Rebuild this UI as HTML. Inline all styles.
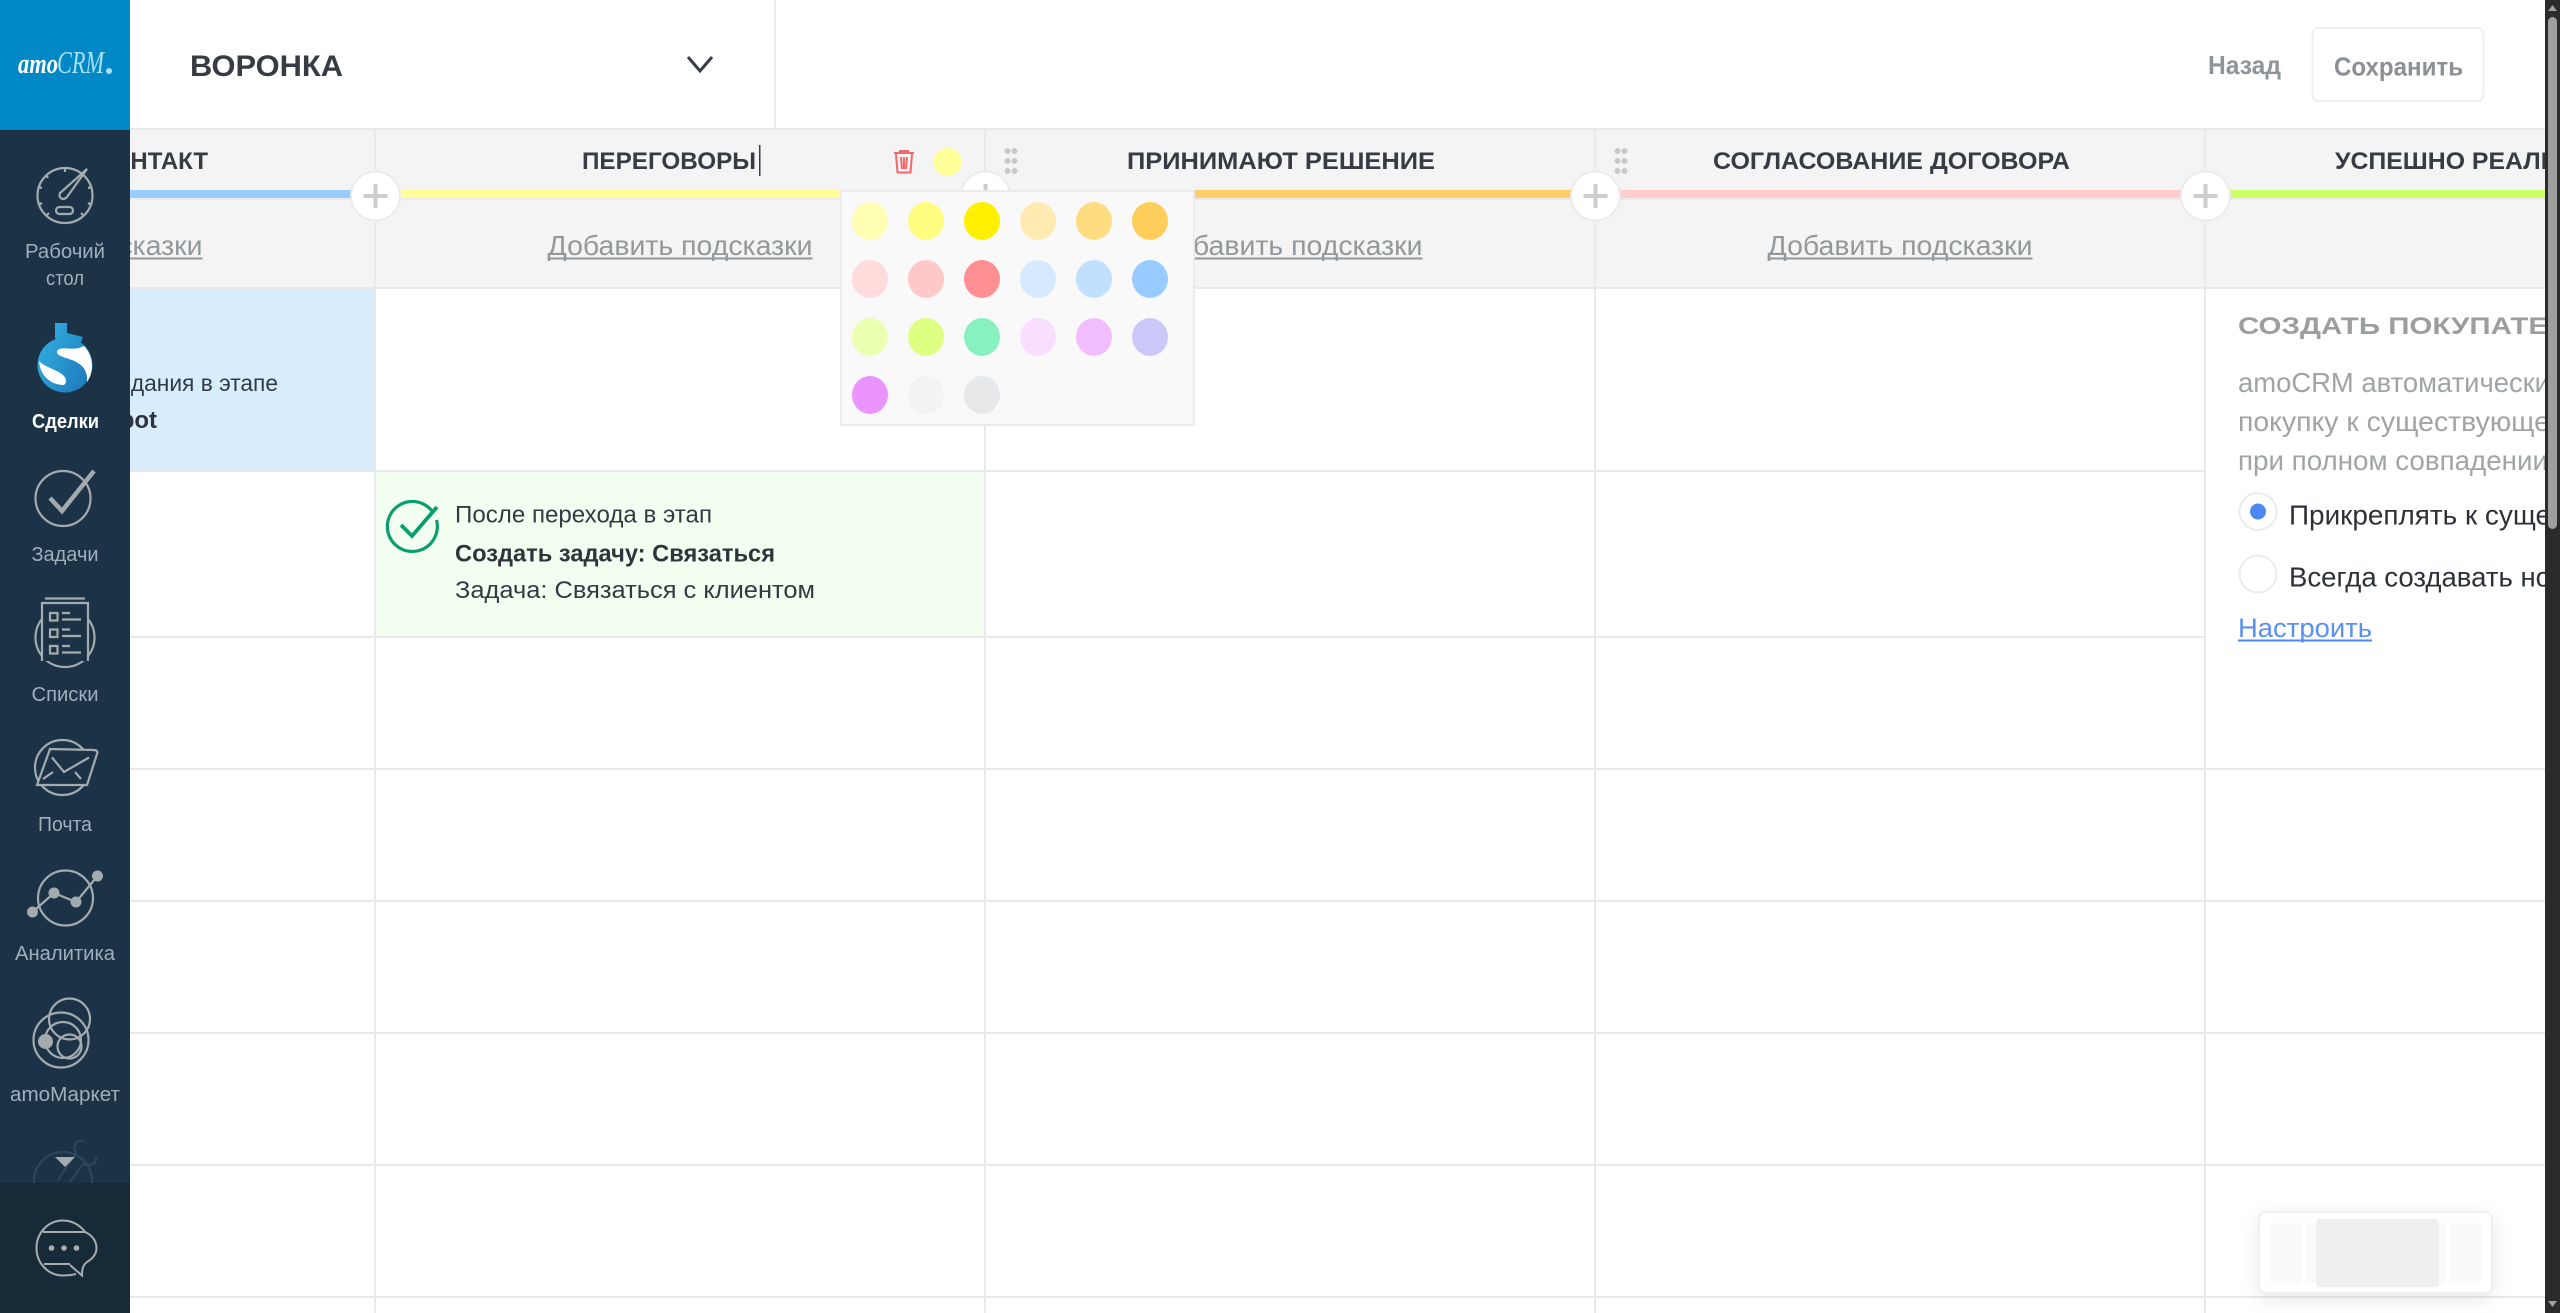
<!DOCTYPE html>
<html lang="ru">
<head>
<meta charset="utf-8">
<title>Воронка</title>
<style>
html,body{margin:0;padding:0;width:2560px;height:1313px;overflow:hidden;background:#fff}
svg{display:block}
text{font-family:"Liberation Sans","DejaVu Sans",sans-serif}
.b{font-weight:700}
</style>
</head>
<body>
<svg xmlns="http://www.w3.org/2000/svg" width="2560" height="1313" viewBox="0 0 2560 1313">
<defs>
<linearGradient id="dg" gradientUnits="userSpaceOnUse" x1="37" y1="340" x2="93" y2="370"><stop offset="0" stop-color="#30aee0"/><stop offset="1" stop-color="#1f7cbd"/></linearGradient>
<filter id="sh" x="-20%" y="-40%" width="140%" height="190%"><feDropShadow dx="0" dy="5" stdDeviation="9" flood-color="#000" flood-opacity="0.09"/></filter>
<clipPath id="wr"><rect x="0" y="1130" width="130" height="53"/></clipPath>
</defs>

<rect width="2560" height="1313" fill="#fff"/>

<!-- top header -->
<rect x="130" y="128" width="2415" height="2" fill="#e8e9ea"/>
<rect x="774" y="0" width="2" height="128" fill="#e8e9ea"/>
<text class="b" x="190" y="76" font-size="29.500" fill="#363b44" textLength="153" lengthAdjust="spacingAndGlyphs">ВОРОНКА</text>
<path d="M688 57 L700 71 L712 57" fill="none" stroke="#363b44" stroke-width="3"/>
<text class="b" x="2208" y="74" font-size="26" fill="#8e9499" textLength="73" lengthAdjust="spacingAndGlyphs">Назад</text>
<rect x="2312.500" y="28" width="171" height="73" rx="6" fill="#fff" stroke="#f0f0f0" stroke-width="2"/>
<text class="b" x="2334" y="75.500" font-size="26" fill="#8b8f96" textLength="129" lengthAdjust="spacingAndGlyphs">Сохранить</text>

<!-- stage header band -->
<rect x="130" y="130" width="2415" height="157" fill="#f4f4f4"/>
<rect x="130" y="287" width="2415" height="2" fill="#e8e9ea"/>
<rect x="130" y="198" width="2415" height="2" fill="#ebebeb"/>
<rect x="130" y="190" width="245" height="8" fill="#99ccff"/>
<rect x="375" y="190" width="610" height="8" fill="#ffff99"/>
<rect x="985" y="190" width="610" height="8" fill="#ffcc66"/>
<rect x="1595" y="190" width="610" height="8" fill="#ffcccc"/>
<rect x="2205" y="190" width="340" height="8" fill="#ccff66"/>

<!-- blue & green cells -->
<rect x="130" y="289" width="244" height="181" fill="#d7edfd"/>
<rect x="376" y="472" width="609" height="164" fill="#f2fef0"/>

<!-- grid lines -->
<g fill="#e8e9ea">
<rect x="374" y="130" width="2" height="1183"/>
<rect x="984" y="130" width="2" height="1183"/>
<rect x="1594" y="130" width="2" height="1183"/>
<rect x="2204" y="130" width="2" height="1183"/>
<rect x="130" y="470" width="2074" height="2"/>
<rect x="130" y="636" width="2074" height="2"/>
<rect x="130" y="768" width="2415" height="2"/>
<rect x="130" y="900" width="2415" height="2"/>
<rect x="130" y="1032" width="2415" height="2"/>
<rect x="130" y="1164" width="2415" height="2"/>
<rect x="130" y="1296" width="2415" height="2"/>
</g>

<!-- plus buttons -->
<g fill="#fff" stroke="#ebebeb" stroke-width="2">
<circle cx="375.500" cy="196" r="24.500"/><circle cx="985.500" cy="196" r="24.500"/><circle cx="1595.500" cy="196" r="24.500"/><circle cx="2205.500" cy="196" r="24.500"/>
</g>
<g stroke="#cdcdcd" stroke-width="4" fill="none">
<path d="M363.500 196H387.500M375.500 184V208"/>
<path d="M973.500 196H997.500M985.500 184V208"/>
<path d="M1583.500 196H1607.500M1595.500 184V208"/>
<path d="M2193.500 196H2217.500M2205.500 184V208"/>
</g>

<!-- stage titles -->
<g class="b" font-size="24" fill="#363b44" font-weight="700">
<text x="-68" y="169" textLength="276" lengthAdjust="spacingAndGlyphs">ПЕРВИЧНЫЙ КОНТАКТ</text>
<text x="582" y="169" textLength="174" lengthAdjust="spacingAndGlyphs">ПЕРЕГОВОРЫ</text>
<text x="1127" y="169" textLength="308" lengthAdjust="spacingAndGlyphs">ПРИНИМАЮТ РЕШЕНИЕ</text>
<text x="1713" y="169" textLength="357" lengthAdjust="spacingAndGlyphs">СОГЛАСОВАНИЕ ДОГОВОРА</text>
<text x="2335" y="169" textLength="330" lengthAdjust="spacingAndGlyphs">УСПЕШНО РЕАЛИЗОВАНО</text>
</g>
<rect x="759" y="145" width="1.500" height="31" fill="#363b44"/>

<!-- drag dots -->
<g fill="#c9c9c9">
<circle cx="1007.500" cy="151" r="3"/><circle cx="1014.500" cy="151" r="3"/><circle cx="1007.500" cy="161" r="3"/><circle cx="1014.500" cy="161" r="3"/><circle cx="1007.500" cy="171" r="3"/><circle cx="1014.500" cy="171" r="3"/>
<circle cx="1617.500" cy="151" r="3"/><circle cx="1624.500" cy="151" r="3"/><circle cx="1617.500" cy="161" r="3"/><circle cx="1624.500" cy="161" r="3"/><circle cx="1617.500" cy="171" r="3"/><circle cx="1624.500" cy="171" r="3"/>
</g>

<!-- trash and colour dot -->
<g fill="none" stroke="#f1696b" stroke-width="2">
<path d="M894 153H914"/>
<path d="M900 153V151H908V153"/>
<path d="M896 154L897.500 172.500H910.500L912 154"/>
<path d="M901 157L902 169M904 157V169M907 157L906 169"/>
</g>
<circle cx="947.500" cy="162" r="14" fill="#ffff99"/>

<!-- hints -->
<g font-size="27.500" fill="#92989b">
<text x="-62.500" y="255" textLength="265" lengthAdjust="spacingAndGlyphs">Добавить подсказки</text>
<text x="547.500" y="255" textLength="265" lengthAdjust="spacingAndGlyphs">Добавить подсказки</text>
<text x="1157.500" y="255" textLength="265" lengthAdjust="spacingAndGlyphs">Добавить подсказки</text>
<text x="1767.500" y="255" textLength="265" lengthAdjust="spacingAndGlyphs">Добавить подсказки</text>
<rect x="130" y="257.500" width="72.500" height="2"/>
<rect x="547.500" y="257.500" width="265" height="2"/>
<rect x="1157.500" y="257.500" width="265" height="2"/>
<rect x="1767.500" y="257.500" width="265" height="2"/>
</g>

<!-- blue cell text -->
<text x="278" y="391" font-size="22.750" fill="#333a42" text-anchor="end">Ожидания в этапе</text>
<text class="b" x="157" y="428" font-size="24" fill="#2f343b" text-anchor="end">Salesbot</text>

<!-- green cell -->
<path d="M432 511 A25 25 0 1 0 436.500 520" fill="none" stroke="#0a9e6c" stroke-width="3.200"/>
<path d="M401 525 L412 536 L437 507" fill="none" stroke="#0a9e6c" stroke-width="3.800"/>
<text x="455" y="522.500" font-size="24" fill="#333a42" textLength="257" lengthAdjust="spacingAndGlyphs">После перехода в этап</text>
<text class="b" x="455" y="561.500" font-size="24" fill="#2f343b" textLength="320" lengthAdjust="spacingAndGlyphs">Создать задачу: Связаться</text>
<text x="455" y="598" font-size="24" fill="#333a42" textLength="360" lengthAdjust="spacingAndGlyphs">Задача: Связаться с клиентом</text>

<!-- colour picker -->
<rect x="841" y="191" width="353" height="234" fill="#f9f9f9" stroke="#ebebeb" stroke-width="2"/>
<g>
<ellipse cx="870" cy="221" rx="18" ry="19" fill="#fffeb2"/><ellipse cx="926" cy="221" rx="18" ry="19" fill="#fffd7f"/><ellipse cx="982" cy="221" rx="18" ry="19" fill="#fff000"/><ellipse cx="1038" cy="221" rx="18" ry="19" fill="#ffeab2"/><ellipse cx="1094" cy="221" rx="18" ry="19" fill="#ffdc7f"/><ellipse cx="1150" cy="221" rx="18" ry="19" fill="#ffce5a"/>
<ellipse cx="870" cy="279" rx="18" ry="19" fill="#ffdbdb"/><ellipse cx="926" cy="279" rx="18" ry="19" fill="#ffc8c8"/><ellipse cx="982" cy="279" rx="18" ry="19" fill="#ff8f92"/><ellipse cx="1038" cy="279" rx="18" ry="19" fill="#d6eaff"/><ellipse cx="1094" cy="279" rx="18" ry="19" fill="#c1e0ff"/><ellipse cx="1150" cy="279" rx="18" ry="19" fill="#98cbff"/>
<ellipse cx="870" cy="337" rx="18" ry="19" fill="#ebffb1"/><ellipse cx="926" cy="337" rx="18" ry="19" fill="#deff81"/><ellipse cx="982" cy="337" rx="18" ry="19" fill="#87f2c0"/><ellipse cx="1038" cy="337" rx="18" ry="19" fill="#f9deff"/><ellipse cx="1094" cy="337" rx="18" ry="19" fill="#f3beff"/><ellipse cx="1150" cy="337" rx="18" ry="19" fill="#ccc8f9"/>
<ellipse cx="870" cy="395" rx="18" ry="19" fill="#eb93ff"/><ellipse cx="926" cy="395" rx="18" ry="19" fill="#f2f3f4"/><ellipse cx="982" cy="395" rx="18" ry="19" fill="#e6e8ea"/>
</g>

<!-- right panel -->
<text class="b" x="2238" y="334" font-size="24.500" fill="#9b9e9f" textLength="352" lengthAdjust="spacingAndGlyphs">СОЗДАТЬ ПОКУПАТЕЛЯ</text>
<g font-size="27.500" fill="#a0a4a6">
<text x="2238" y="392" textLength="312" lengthAdjust="spacingAndGlyphs">amoCRM автоматически</text>
<text x="2238" y="431" textLength="312" lengthAdjust="spacingAndGlyphs">покупку к существующе</text>
<text x="2238" y="470" textLength="310" lengthAdjust="spacingAndGlyphs">при полном совпадении</text>
</g>
<circle cx="2258" cy="511.500" r="18.500" fill="#fff" stroke="#ebebeb" stroke-width="2"/>
<circle cx="2258" cy="511.500" r="8" fill="#4c87f4"/>
<circle cx="2258" cy="574" r="18.500" fill="#fff" stroke="#ebebeb" stroke-width="2"/>
<text x="2289" y="524.500" font-size="27.500" fill="#2d3238" textLength="262" lengthAdjust="spacingAndGlyphs">Прикреплять к суще</text>
<text x="2289" y="586.500" font-size="27.500" fill="#2d3238" textLength="262" lengthAdjust="spacingAndGlyphs">Всегда создавать но</text>
<text x="2238" y="637" font-size="27" fill="#5a90f0" textLength="134" lengthAdjust="spacingAndGlyphs">Настроить</text>
<rect x="2238" y="639.500" width="134" height="2" fill="#4c87f4"/>

<!-- floating widget -->
<rect x="2259" y="1212" width="233" height="81" rx="7" fill="#fff" stroke="#efefef" stroke-width="2" filter="url(#sh)"/>
<g fill="#fafafa">
<rect x="2269" y="1223" width="32" height="60" rx="3"/><rect x="2305" y="1223" width="32" height="60" rx="3"/><rect x="2341" y="1223" width="32" height="60" rx="3"/><rect x="2377" y="1223" width="32" height="60" rx="3"/><rect x="2413" y="1223" width="32" height="60" rx="3"/><rect x="2449" y="1223" width="32" height="60" rx="3"/>
</g>
<rect x="2316" y="1219" width="123" height="68" rx="4" fill="#efefef"/>

<!-- scrollbar -->
<rect x="2545" y="0" width="15" height="1313" fill="#2b2b2b"/>
<rect x="2548" y="17" width="9" height="512" rx="4.500" fill="#9f9f9f"/>
<path d="M2552.500 5 L2557 11 H2548 Z" fill="#9f9f9f"/>
<path d="M2548 1301 H2557 L2552.500 1307 Z" fill="#9f9f9f"/>

<!-- sidebar -->
<rect x="0" y="0" width="130" height="130" fill="#0089c6"/>
<rect x="0" y="130" width="130" height="1053" fill="#1c3347"/>
<rect x="0" y="1183" width="130" height="130" fill="#162a38"/>

<!-- logo -->
<text x="18" y="73" font-size="28" font-weight="700" font-style="italic" fill="#fff" style="font-family:'Liberation Serif',serif" textLength="40" lengthAdjust="spacingAndGlyphs">amo</text>
<text x="57" y="73" font-size="32" font-style="italic" fill="#a9e0f7" style="font-family:'Liberation Serif',serif" textLength="47" lengthAdjust="spacingAndGlyphs">CRM</text>
<circle cx="109" cy="71" r="3" fill="#a9e0f7"/>

<g fill="none" stroke="#a3abaf" stroke-width="2.200">
<!-- dashboard -->
<circle cx="65" cy="195.500" r="27.500"/>
<path d="M87 169 L67 197 C63 201 58 198 60 193 Z" />
<rect x="56" y="207" width="17" height="7" rx="3.500"/>
<path d="M65 168V172M46 175L48 178M38 187L42 188M38 205L42 203M46 216L49 213M84 216L81 213M92 205L88 203M92 187L88 188" />
<!-- tasks -->
<circle cx="63" cy="498.500" r="27.500"/>
<path d="M50 498 L62 511 L94 471" stroke-width="4.500"/>
<!-- lists -->
<circle cx="65" cy="637.500" r="29.500"/>
<path d="M42 661 V603 H88 V661" fill="#1c3347"/>
<path d="M45 598.500 H85"/>
<path d="M50 613 h7.500 v7.500 h-7.500 z M50 629.500 h7.500 v7.500 h-7.500 z M50 646 h7.500 v7.500 h-7.500 z"/>
<path d="M62 613 h8 M62 619.500 h19 M62 629.500 h8 M62 636 h19 M62 646 h8 M62 652.500 h19"/>
<!-- mail -->
<circle cx="62.500" cy="767.500" r="27.500"/>
<path d="M50 749 L94 750 C97 750 98 752 97 754 L87 785 H37 Z" fill="#1c3347"/>
<path d="M52 757.500 L64 772 L89 757.500"/>
<path d="M43 779 L53 772 M75 772 L81 779"/>
<!-- analytics -->
<circle cx="65.500" cy="898" r="27.500"/>
<path d="M32.500 912 L54 893 L76 902 L97.500 876" />
<!-- market -->
<circle cx="61" cy="1040" r="27.500"/>
<circle cx="69.500" cy="1019" r="20.500"/>
<circle cx="63" cy="1040" r="18"/>
<circle cx="69.500" cy="1046.500" r="12"/>
</g>
<circle cx="32.500" cy="912" r="5.500" fill="#a3abaf"/>
<circle cx="54" cy="893" r="5.500" fill="#a3abaf"/>
<circle cx="76" cy="902" r="5.500" fill="#a3abaf"/>
<circle cx="97.500" cy="876" r="5.500" fill="#a3abaf"/>
<circle cx="45.500" cy="1041.500" r="7.500" fill="#a3abaf"/>

<!-- deals icon -->
<circle cx="65" cy="365" r="27.500" fill="url(#dg)"/>
<path d="M55 323 H67 V333 L83 337 L80 345 L60 345 L55 338 Z" fill="url(#dg)"/>
<path d="M57 351 C60 346 70 350 79 348 L84 346 C90 352 92 360 92 366 C92 372 90 378 87 382 C88 370 82 364 72 360 C64 357 56 356 57 351 Z" fill="#fff"/>
<path d="M39 361 C46 369 66 371 66 381 C66 383 65 384 64 385 C50 385 40 375 39 361 Z" fill="#fff"/>

<!-- wrench, faded -->
<g fill="none" stroke="#2f4759" stroke-width="2" clip-path="url(#wr)">
<circle cx="63" cy="1181" r="29"/>
<path d="M84 1141 C76 1139 72 1146 76 1153 L58 1180 M96 1157 C97 1164 89 1167 83 1164 L70 1182"/>
</g>
<path d="M55 1157 H75 L65 1167 Z" fill="#a3abaf"/>

<!-- chat -->
<g fill="none" stroke="#a9adaf" stroke-width="2">
<path d="M76 1274 C72 1275 68 1275.500 63 1275.500 C48 1275.500 36.500 1263 36.500 1248 C36.500 1233 48 1220.500 63 1220.500 C72 1220.500 80 1225 85 1232 C92 1235 96.500 1241 96.500 1248 C96.500 1255 92 1259 87 1262 C83 1265 82 1269 82 1275.500 L70 1265"/>
<path d="M43 1232 H85 M44 1264 H70"/>
</g>
<circle cx="51.500" cy="1248" r="2.800" fill="#a9adaf"/><circle cx="64" cy="1248" r="2.800" fill="#a9adaf"/><circle cx="76.500" cy="1248" r="2.800" fill="#a9adaf"/>

<!-- sidebar labels -->
<g font-size="20.500" fill="#9fb0bc">
<text x="25" y="258" textLength="80" lengthAdjust="spacingAndGlyphs">Рабочий</text>
<text x="46" y="285" textLength="38" lengthAdjust="spacingAndGlyphs">стол</text>
<text x="31.500" y="561" textLength="67" lengthAdjust="spacingAndGlyphs">Задачи</text>
<text x="31.500" y="701" textLength="67" lengthAdjust="spacingAndGlyphs">Списки</text>
<text x="38" y="831" textLength="54" lengthAdjust="spacingAndGlyphs">Почта</text>
<text x="15" y="960" textLength="100" lengthAdjust="spacingAndGlyphs">Аналитика</text>
<text x="10" y="1101" textLength="110" lengthAdjust="spacingAndGlyphs">amoМаркет</text>
</g>
<text class="b" x="32" y="428" font-size="20.500" fill="#fff" textLength="67" lengthAdjust="spacingAndGlyphs">Сделки</text>
</svg>
</body>
</html>
